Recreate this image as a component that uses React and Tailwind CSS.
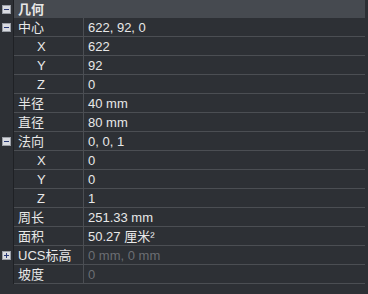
import React from 'react';

const ROWS = [
  { label: '中心', value: '622, 92, 0', toggle: 'minus' },
  { label: 'X', value: '622', sub: true },
  { label: 'Y', value: '92', sub: true },
  { label: 'Z', value: '0', sub: true },
  { label: '半径', value: '40 mm' },
  { label: '直径', value: '80 mm' },
  { label: '法向', value: '0, 0, 1', toggle: 'minus' },
  { label: 'X', value: '0', sub: true },
  { label: 'Y', value: '0', sub: true },
  { label: 'Z', value: '1', sub: true },
  { label: '周长', value: '251.33 mm' },
  { label: '面积', value: '50.27 厘米²' },
  { label: 'UCS标高', value: '0 mm, 0 mm', toggle: 'plus', disabled: true },
  { label: '坡度', value: '0', disabled: true },
];

const Toggle = ({ kind }) => (
  <div className="w-[9px] h-[9px] bg-[#d9dbe0] border border-[#9a9ea6] flex items-center justify-center relative">
    <div className="w-[5px] h-px bg-[#2a3a78]" />
    {kind === 'plus' && <div className="absolute w-px h-[5px] bg-[#2a3a78]" />}
  </div>
);

export default function App() {
  return (
    <div
      className="w-[368px] h-[294px] bg-[#2d3035] text-[#e8e8e8] text-[13px] leading-none overflow-hidden"
      style={{ fontFamily: '"Liberation Sans", "Noto Sans CJK SC", sans-serif' }}
    >
      <div className="w-[365px]">
        {/* 标题行 */}
        <div className="flex h-[18px]">
          <div className="w-[14px] shrink-0 border-r border-[#1f2125] flex items-center justify-center">
            <Toggle kind="minus" />
          </div>
          <div className="flex-1 bg-[#464a50] flex items-center pl-[4px] font-bold">几何</div>
        </div>

        {ROWS.map((row, i) => (
          <div key={i} className="flex h-[19px]">
            <div className="w-[14px] shrink-0 border-r border-[#1f2125] flex items-center justify-center">
              {row.toggle && <Toggle kind={row.toggle} />}
            </div>
            <div className="flex-1 flex border-b border-[#4b4e53]">
              <div
                className={`w-[70px] shrink-0 border-r border-[#4b4e53] flex items-center ${
                  row.sub ? 'pl-[23px]' : 'pl-[4px]'
                }`}
              >
                {row.label}
              </div>
              <div
                className={`flex-1 flex items-center pl-[4px] ${
                  row.disabled ? 'text-[#6b6e73]' : ''
                }`}
              >
                {row.value}
              </div>
            </div>
          </div>
        ))}
      </div>
    </div>
  );
}
